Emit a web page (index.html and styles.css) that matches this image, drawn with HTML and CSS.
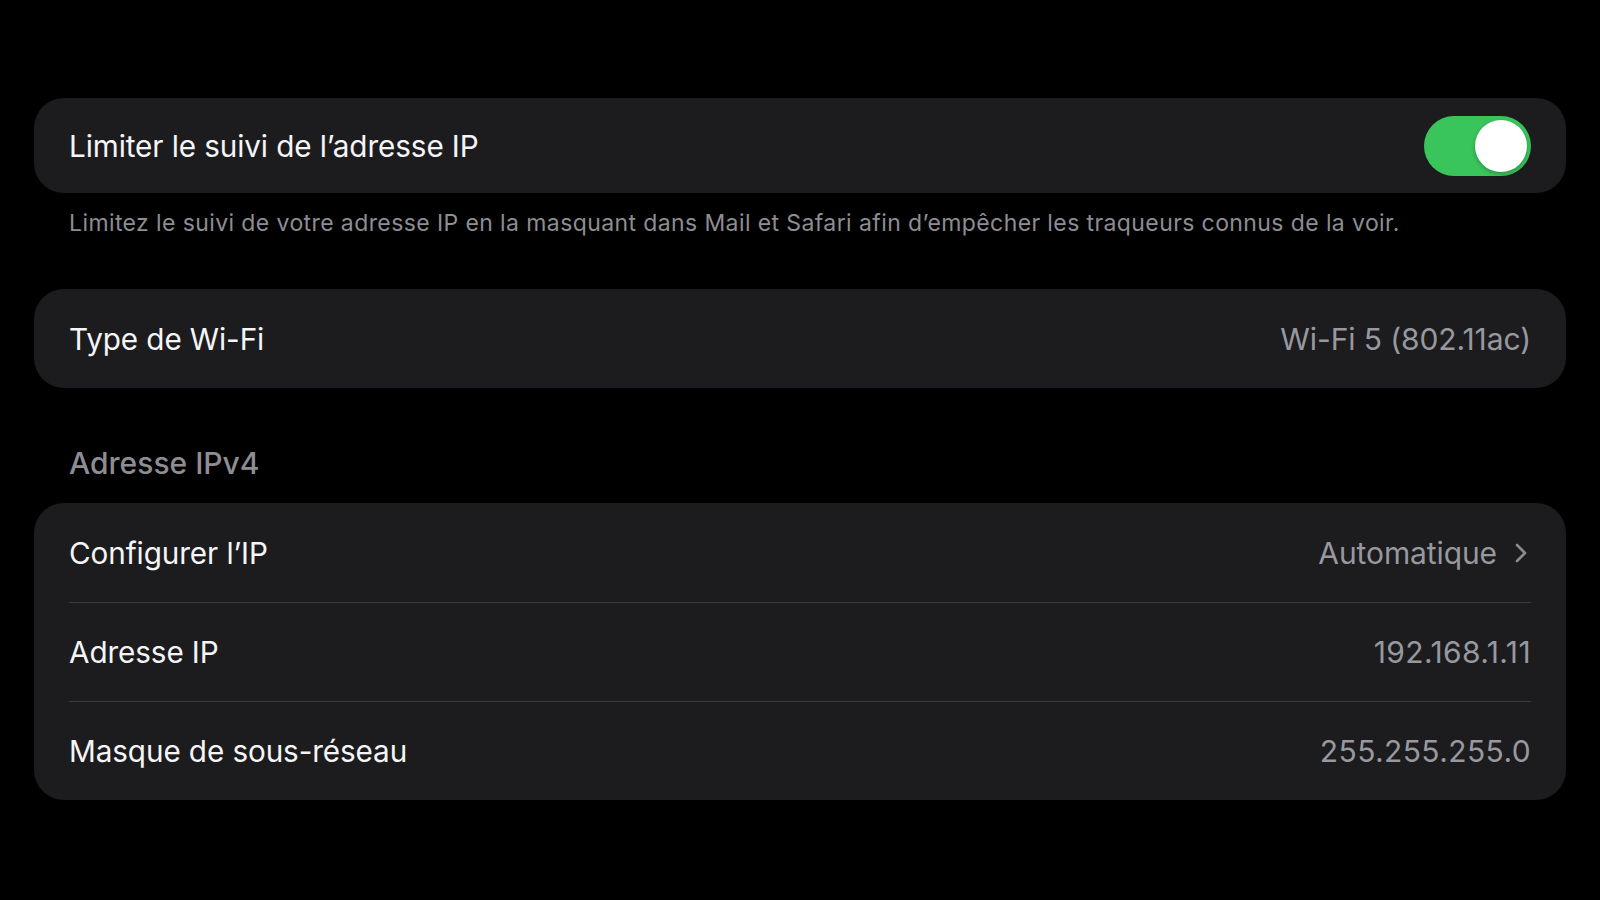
FILE: index.html
```html
<!DOCTYPE html>
<html lang="fr">
<head>
    <meta charset="UTF-8">
    <meta name="viewport" content="width=device-width, initial-scale=1.0">
    <title>Wi-Fi</title>
    <link rel="stylesheet" href="styles.css">
</head>
<body>
    <div id="main">
        <div class="group">
            <div class="row">
                <span class="label">Limiter le suivi de l’adresse IP</span>
                <span class="toggle on"><span class="knob"></span></span>
            </div>
        </div>
        <p class="footer">Limitez le suivi de votre adresse IP en la masquant dans Mail et Safari afin d’empêcher les traqueurs connus de la voir.</p>

        <div class="group">
            <div class="row">
                <span class="label">Type de Wi-Fi</span>
                <span class="value">Wi-Fi 5 (802.11ac)</span>
            </div>
        </div>

        <h2 class="section-title">Adresse IPv4</h2>
        <div class="group">
            <div class="row">
                <span class="label">Configurer l’IP</span>
                <span class="value">Automatique
                    <svg class="chevron" viewBox="0 0 12 20" width="12" height="20"><path d="M2 2l8 8-8 8" fill="none" stroke="currentColor" stroke-width="2.6" stroke-linecap="round" stroke-linejoin="round"/></svg>
                </span>
            </div>
            <div class="row">
                <span class="label">Adresse IP</span>
                <span class="value num">192.168.1.11</span>
            </div>
            <div class="row">
                <span class="label">Masque de sous-réseau</span>
                <span class="value num">255.255.255.0</span>
            </div>
        </div>
    </div>
</body>
</html>
```

FILE: styles.css
```css
body {
    margin: 0;
    padding: 0;
    font-family: 'Inter', 'Roboto', sans-serif;
    background-color: #000;
    color: #fff;
    overflow: hidden;
}
#main {
    height: 900px;
    box-sizing: border-box;
    padding: 98px 34px 0;
}
.group {
    background-color: #1c1c1e;
    border-radius: 30px;
}
.row {
    display: flex;
    align-items: center;
    justify-content: space-between;
    height: 99px;
    margin: 0 35px;
    box-sizing: border-box;
}
.row + .row {
    border-top: 1px solid #3a3a3c;
}
.group:first-child .row {
    height: 95px;
}
.label {
    font-size: 29.7px;
    letter-spacing: -0.1px;
    color: #f5f5f7;
}
.value {
    font-size: 30px;
    letter-spacing: -0.1px;
    color: #98989f;
    display: flex;
    align-items: center;
    gap: 18px;
}
.value.num {
    letter-spacing: 0.4px;
}
.chevron {
    color: #8a8a90;
    margin-right: 4px;
}
.toggle {
    width: 107px;
    height: 60px;
    border-radius: 30px;
    background-color: #3ac45c;
    position: relative;
}
.toggle .knob {
    position: absolute;
    top: 4px;
    right: 4px;
    width: 52px;
    height: 52px;
    border-radius: 50%;
    background-color: #fff;
    box-shadow: 0 2px 4px rgba(0, 0, 0, 0.25);
}
.footer {
    margin: 15px 35px 0;
    font-size: 23px;
    line-height: 30px;
    letter-spacing: 0.4px;
    color: #8d8d93;
    height: 81px;
}
.section-title {
    margin: 0 35px;
    padding: 57px 0 22px;
    font-size: 30px;
    font-weight: 500;
    line-height: 36px;
    color: #8d8d93;
}
```
